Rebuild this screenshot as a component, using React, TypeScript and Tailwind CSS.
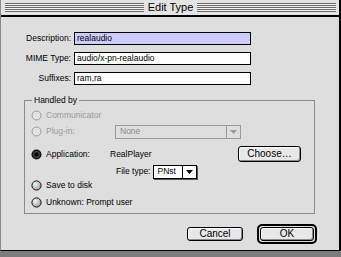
import React from 'react';

const font = { fontFamily: '"Liberation Sans", Arial, sans-serif' };

// Radio button states drawn as tiny SVG circles
function Radio({ state }: { state: 'disabled' | 'on' | 'off' }) {
  if (state === 'disabled') {
    return (
      <svg width="11" height="11" viewBox="0 0 11 11" className="shrink-0">
        <circle cx="5.5" cy="5.5" r="4.5" fill="#e2e2e2" stroke="#9a9a9a" strokeWidth="1" />
      </svg>
    );
  }
  if (state === 'on') {
    return (
      <svg width="11" height="11" viewBox="0 0 11 11" className="shrink-0">
        <circle cx="5.5" cy="5.5" r="5" fill="#111" />
        <circle cx="5.5" cy="5.5" r="3.4" fill="#4a4a4a" />
        <circle cx="5.5" cy="5.5" r="2.2" fill="#000" />
      </svg>
    );
  }
  return (
    <svg width="11" height="11" viewBox="0 0 11 11" className="shrink-0">
      <defs>
        <radialGradient id="rg" cx="0.38" cy="0.35" r="0.7">
          <stop offset="0" stopColor="#f4f4f4" />
          <stop offset="1" stopColor="#9d9d9d" />
        </radialGradient>
      </defs>
      <circle cx="5.5" cy="5.5" r="4.6" fill="url(#rg)" stroke="#111" strokeWidth="1" />
    </svg>
  );
}

function Field({ label, value, tint }: { label: string; value: string; tint?: boolean }) {
  return (
    <div className="flex items-center h-[13px]">
      <div className="w-[70px] text-right text-[8.5px] text-black leading-none">{label}</div>
      <div
        className={`ml-[3px] w-[177px] h-[13px] border border-black flex items-center pl-[2px] text-[8.5px] leading-none text-black ${
          tint ? 'bg-[#ccccff]' : 'bg-white'
        }`}
      >
        {value}
      </div>
    </div>
  );
}

function Stripes() {
  return (
    <div className="flex-1 flex flex-col gap-[1px] bg-[#f4f4f4]">
      <div className="h-px bg-[#6a6a6a]" />
      <div className="h-px bg-[#6a6a6a]" />
      <div className="h-px bg-[#6a6a6a]" />
      <div className="h-px bg-[#6a6a6a]" />
      <div className="h-px bg-[#6a6a6a]" />
    </div>
  );
}

export default function App() {
  return (
    <div className="w-[341px] h-[257px] bg-[#7c7c7c] overflow-hidden" style={font}>
      <div className="w-[341px] h-[251px] bg-[#dedede] border-l border-l-[#8a8a8a] border-r-2 border-r-black border-b border-b-black flex flex-col">
        {/* Title bar */}
        <div className="h-[15px] bg-[#e4e4e4] flex items-center pl-[4px] pr-[3px]">
          <Stripes />
          <div className="px-[4px] text-[11px] leading-none text-black">Edit Type</div>
          <Stripes />
        </div>
        <div className="h-[2px] bg-black" />

        {/* Fields */}
        <div className="pt-[15px] flex flex-col gap-[7px]">
          <Field label="Description:" value="realaudio" tint />
          <Field label="MIME Type:" value="audio/x-pn-realaudio" />
          <Field label="Suffixes:" value="ram,ra" />
        </div>

        {/* Handled by group */}
        <div className="relative ml-[23px] mt-[15px] w-[291px] border border-[#8a8a8a] pt-[7px] pb-[4px] text-[8.5px] leading-none">
          <span className="absolute left-[7px] top-[-5px] px-[2px] bg-[#dedede] text-black">Handled by</span>

          <div className="h-[15px] flex items-center pl-[6px] gap-[4px] text-[#9a9a9a]">
            <Radio state="disabled" />
            <span>Communicator</span>
          </div>

          <div className="mt-[1px] h-[15px] flex items-center">
            <div className="w-[90px] flex items-center pl-[6px] gap-[4px] text-[#9a9a9a]">
              <Radio state="disabled" />
              <span>Plug-in:</span>
            </div>
            <div className="w-[126px] h-[14px] border border-[#9a9a9a] flex items-center">
              <span className="flex-1 pl-[4px] text-[#8a8a8a]">None</span>
              <div className="w-[14px] h-full border-l border-[#9a9a9a] flex items-center justify-center">
                <svg width="7" height="4" viewBox="0 0 7 4">
                  <polygon points="0,0 7,0 3.5,4" fill="#9a9a9a" />
                </svg>
              </div>
            </div>
          </div>

          <div className="mt-[7px] h-[16px] flex items-center">
            <div className="w-[85px] flex items-center pl-[6px] gap-[4px] text-black">
              <Radio state="on" />
              <span>Application:</span>
            </div>
            <span className="w-[128px] text-black">RealPlayer</span>
            <div className="w-[63px] h-[16px] rounded-[3px] border border-black bg-[#e8e8e8] shadow-[inset_-1px_-1px_0_#8a8a8a,inset_1px_1px_0_#ffffff] flex items-center justify-center text-[10px] text-black">
              Choose…
            </div>
          </div>

          <div className="mt-[2px] h-[15px] flex items-center pl-[91px]">
            <span className="text-black">File type:</span>
            <div className="ml-[2px] w-[44px] h-[14px] border border-black bg-white shadow-[1px_1px_0_#555] flex items-center">
              <span className="flex-1 pl-[4px] text-black">PNst</span>
              <div className="w-[14px] h-full border-l border-black flex items-center justify-center">
                <svg width="7" height="4" viewBox="0 0 7 4">
                  <polygon points="0,0 7,0 3.5,4" fill="#000" />
                </svg>
              </div>
            </div>
          </div>

          <div className="h-[13px] flex items-center pl-[6px] gap-[4px] text-black">
            <Radio state="off" />
            <span>Save to disk</span>
          </div>

          <div className="mt-[4px] h-[13px] flex items-center pl-[6px] gap-[4px] text-black">
            <Radio state="off" />
            <span>Unknown: Prompt user</span>
          </div>
        </div>

        {/* Buttons */}
        <div className="mt-[10px] flex items-center justify-end pr-[22px] gap-[14px]">
          <div className="w-[56px] h-[14px] rounded-[3px] border border-black bg-[#e8e8e8] shadow-[inset_-1px_-1px_0_#8a8a8a,inset_1px_1px_0_#ffffff] flex items-center justify-center text-[10px] leading-none text-black">
            Cancel
          </div>
          <div className="w-[60px] h-[20px] rounded-[5px] border-2 border-black p-[1px]">
            <div className="w-full h-full rounded-[3px] border border-black bg-[#e8e8e8] shadow-[inset_-1px_-1px_0_#8a8a8a,inset_1px_1px_0_#ffffff] flex items-center justify-center text-[10px] leading-none text-black">
              OK
            </div>
          </div>
        </div>
      </div>
    </div>
  );
}
